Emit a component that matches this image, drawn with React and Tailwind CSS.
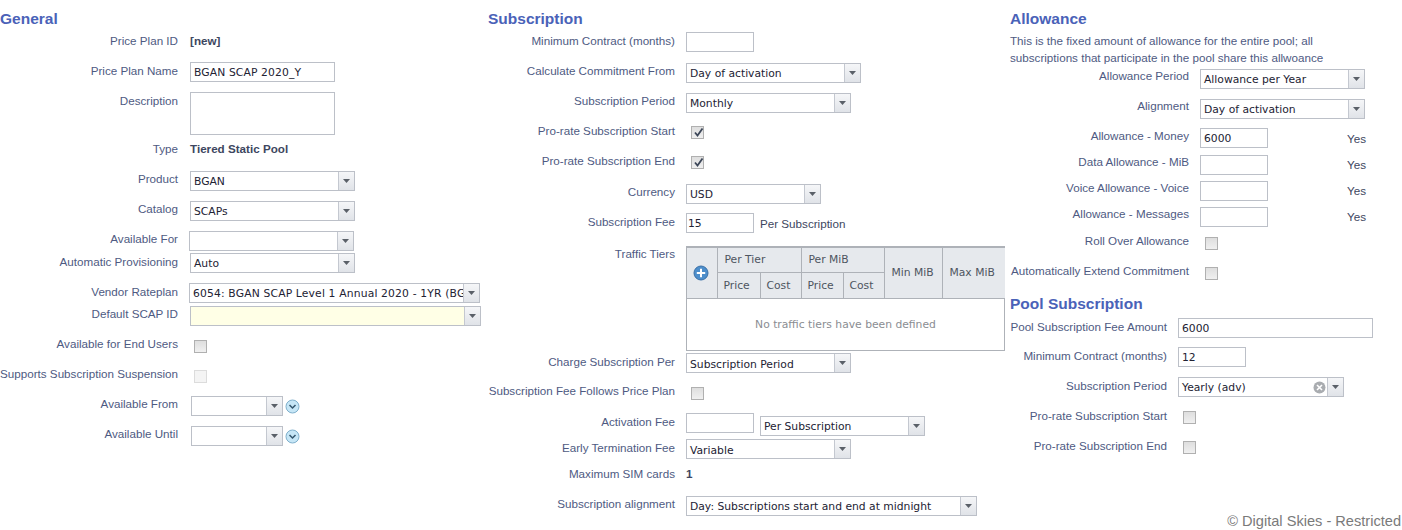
const sans = "font-['Liberation_Sans',Arial,sans-serif]";
const inputFont = "font-['DejaVu_Sans',Verdana,sans-serif] text-[10.75px] text-[#222233]";

function Row({ h, w, lo = "pt-px", children }) {
  return (
    <div className={`flex shrink-0 ${h}`}>
      <div className={`shrink-0 text-right text-[11.65px] leading-4 text-[#4e5a82] whitespace-nowrap ${w} ${lo}`}>{children[0]}</div>
      <div className="ml-[11px] min-w-0 flex-1">{children[1]}</div>
    </div>
  );
}

function Heading({ children }) {
  return <h2 className="text-[15.5px] leading-[18px] font-bold text-[#4a62b8]">{children}</h2>;
}

function TextBox({ w, value = "", tall = false, pad = "pl-[3px]", track = "" }) {
  return (
    <div className={`border border-[#bcc0c8] bg-white leading-[20px] overflow-hidden whitespace-nowrap ${pad} ${inputFont} ${tall ? "h-[43px]" : "h-[20px]"} ${w} ${track}`}>
      {value}
    </div>
  );
}

function Arrow() {
  return (
    <svg width="7" height="4" viewBox="0 0 7 4" aria-hidden="true">
      <path d="M0 0h7L3.5 4z" fill="#5a6068" />
    </svg>
  );
}

function Select({ w, value = "", bg = "bg-white", lead = "leading-[19px]", track = "", children }) {
  return (
    <div className={`flex h-[20px] border border-[#bcc0c8] ${bg} ${inputFont} ${w}`}>
      <div className={`relative min-w-0 flex-1 overflow-hidden whitespace-nowrap pl-[3px] ${lead} ${track}`}>
        {value}
        {children}
      </div>
      <div className="flex w-[16px] shrink-0 items-center justify-center border-l border-[#c4c8d0] bg-gradient-to-b from-[#f5f6f8] to-[#e0e3e8]">
        <Arrow />
      </div>
    </div>
  );
}

function Check({ checked, disabled }) {
  return (
    <div className={`relative ml-[5px] h-[13px] w-[13px] border ${disabled ? "border-[#dcdcdc] bg-[#f4f4f4]" : "border-[#b0b0b0] bg-gradient-to-b from-[#dedede] to-[#f0f0f0]"}`}>
      {checked && (
        <svg className="absolute left-px top-0" width="11" height="11" viewBox="0 0 11 11" aria-hidden="true">
          <path d="M2 5.5l2.5 3L9.5 1.5" fill="none" stroke="#3c4658" strokeWidth="1.8" />
        </svg>
      )}
    </div>
  );
}

function DateField() {
  return (
    <div className="ml-[2px] flex items-center">
      <Select w="w-[92px]" />
      <svg className="ml-[2px]" width="15" height="15" viewBox="0 0 15 15" aria-hidden="true">
        <circle cx="7.5" cy="7.5" r="6.5" fill="#c6e6f6" stroke="#7fb0cc" />
        <path d="M4.5 6l3 3 3-3" fill="none" stroke="#34566e" strokeWidth="1.5" />
      </svg>
    </div>
  );
}

function Static({ children, cls = "" }) {
  return <div className={`pt-px text-[11.65px] leading-4 font-bold text-[#3d4660] ${cls}`}>{children}</div>;
}

const th = "border border-[#aeb2b8] bg-[#e6e9ed] font-normal text-[#4e5560] text-[10.75px] text-left p-0 pl-[7px]";
const thSub = "border border-[#aeb2b8] bg-[#e6e9ed] font-normal text-[#4e5560] text-[10.75px] text-left p-0 pl-[6px] pt-[2px]";

function Tiers() {
  return (
    <div className={`w-[319px] border-t-2 border-x border-b border-[#aeb2b8] ${inputFont}`}>
      <table className="w-full table-fixed border-collapse">
        <colgroup>
          <col className="w-[30px]" />
          <col className="w-[43px]" />
          <col className="w-[41px]" />
          <col className="w-[42px]" />
          <col className="w-[41px]" />
          <col className="w-[58px]" />
          <col className="w-[63px]" />
        </colgroup>
        <thead>
          <tr className="h-[24px]">
            <th rowSpan={2} className={`${th} border-l-0 border-t-0 !pl-[6px]`}>
              <svg width="16" height="16" viewBox="0 0 16 16" aria-hidden="true" className="mt-px">
                <circle cx="8" cy="8" r="7" fill="#4d8ecb" stroke="#3a70a8" />
                <path d="M8 3.8v8.4M3.8 8h8.4" stroke="#ffffff" strokeWidth="2" />
              </svg>
            </th>
            <th colSpan={2} className={`${th} border-t-0`}>Per Tier</th>
            <th colSpan={2} className={`${th} border-t-0`}>Per MiB</th>
            <th rowSpan={2} className={`${th} border-t-0`}>Min MiB</th>
            <th rowSpan={2} className={`${th} border-t-0 border-r-0`}>Max MiB</th>
          </tr>
          <tr className="h-[26px]">
            <th className={thSub}>Price</th>
            <th className={thSub}>Cost</th>
            <th className={thSub}>Price</th>
            <th className={thSub}>Cost</th>
          </tr>
        </thead>
      </table>
      <div className="flex h-[51px] items-center justify-center pt-[3px] text-[#8a8d92]">No traffic tiers have been defined</div>
    </div>
  );
}

function General() {
  const L = "w-[178px]";
  return (
    <section className="w-[488px] shrink-0">
      <div className="h-[32px] pt-[10px]"><Heading>General</Heading></div>
      <Row h="h-[30px]" w={L}>{["Price Plan ID", <Static cls="ml-px">[new]</Static>]}</Row>
      <Row h="h-[30px]" w={L}>{["Price Plan Name", <div className="ml-px"><TextBox w="w-[145px]" value="BGAN SCAP 2020_Y" track="tracking-[0.12px]" /></div>]}</Row>
      <Row h="h-[48px]" w={L}>{["Description", <div className="ml-px"><TextBox w="w-[145px]" tall /></div>]}</Row>
      <Row h="h-[31px]" w={L}>{["Type", <Static cls="ml-px">Tiered Static Pool</Static>]}</Row>
      <Row h="h-[30px]" w={L} lo="pt-0">{["Product", <div className="ml-px"><Select w="w-[165px]" value="BGAN" /></div>]}</Row>
      <Row h="h-[30px]" w={L} lo="pt-0">{["Catalog", <div className="ml-px"><Select w="w-[165px]" value="SCAPs" /></div>]}</Row>
      <Row h="h-[22px]" w={L} lo="pt-0">{["Available For", <Select w="w-[165px]" />]}</Row>
      <Row h="h-[30px]" w={L}>{["Automatic Provisioning", <div className="ml-px"><Select w="w-[165px]" value="Auto" /></div>]}</Row>
      <Row h="h-[23px]" w={L}>{["Vendor Rateplan", <Select w="w-[291px]" value="6054: BGAN SCAP Level 1 Annual 2020 - 1YR (BGAN)" track="tracking-[0.16px]" />]}</Row>
      <Row h="h-[30px]" w={L} lo="pt-0">{["Default SCAP ID", <div className="ml-px"><Select w="w-[291px]" bg="bg-[#ffffe6]" /></div>]}</Row>
      <Row h="h-[30px]" w={L} lo="pt-0">{["Available for End Users", <div className="pt-[4px]"><Check /></div>]}</Row>
      <Row h="h-[30px]" w={L} lo="pt-0">{["Supports Subscription Suspension", <div className="pt-[4px]"><Check disabled /></div>]}</Row>
      <Row h="h-[30px]" w={L} lo="pt-0">{["Available From", <DateField />]}</Row>
      <Row h="h-[30px]" w={L} lo="pt-0">{["Available Until", <DateField />]}</Row>
    </section>
  );
}

function Subscription() {
  const L = "w-[187px]";
  return (
    <section className="w-[522px] shrink-0">
      <div className="h-[32px] pt-[10px]"><Heading>Subscription</Heading></div>
      <Row h="h-[31px]" w={L}>{["Minimum Contract (months)", <TextBox w="w-[68px]" />]}</Row>
      <Row h="h-[30px]" w={L} lo="pt-0">{["Calculate Commitment From", <Select w="w-[175px]" value="Day of activation" />]}</Row>
      <Row h="h-[30px]" w={L} lo="pt-0">{["Subscription Period", <Select w="w-[165px]" value="Monthly" />]}</Row>
      <Row h="h-[30px]" w={L} lo="pt-0">{["Pro-rate Subscription Start", <div className="pt-[3px]"><Check checked /></div>]}</Row>
      <Row h="h-[31px]" w={L} lo="pt-0">{["Pro-rate Subscription End", <div className="pt-[3px]"><Check checked /></div>]}</Row>
      <Row h="h-[29px]" w={L} lo="pt-0">{["Currency", <Select w="w-[135px]" value="USD" />]}</Row>
      <Row h="h-[33px]" w={L}>{["Subscription Fee", <div className="flex items-start"><TextBox w="w-[68px]" value="15" pad="pl-px" /><span className={`ml-[6px] pt-[3px] text-[11.65px] leading-4 text-[#3d4660] ${sans}`}>Per Subscription</span></div>]}</Row>
      <Row h="h-[107px]" w={L} lo="pt-0">{["Traffic Tiers", <Tiers />]}</Row>
      <Row h="h-[30px]" w={L}>{["Charge Subscription Per", <Select w="w-[165px]" value="Subscription Period" lead="leading-[21px]" />]}</Row>
      <Row h="h-[30px]" w={L} lo="pt-0">{["Subscription Fee Follows Price Plan", <div className="pt-[4px]"><Check /></div>]}</Row>
      <Row h="h-[26px]" w={L}>{["Activation Fee", <div className="flex items-start"><TextBox w="w-[68px]" /><div className="ml-[6px] mt-[3px]"><Select w="w-[165px]" value="Per Subscription" /></div></div>]}</Row>
      <Row h="h-[26px]" w={L}>{["Early Termination Fee", <Select w="w-[165px]" value="Variable" lead="leading-[21px]" />]}</Row>
      <Row h="h-[31px]" w={L}>{["Maximum SIM cards", <Static>1</Static>]}</Row>
      <Row h="h-[20px]" w={L} lo="pt-0">{["Subscription alignment", <Select w="w-[291px]" value="Day: Subscriptions start and end at midnight" />]}</Row>
    </section>
  );
}

function Yes({ pt = "pt-[2px]" }) {
  return <span className={`ml-[79px] text-[11.65px] leading-4 text-[#3d4660] ${pt}`}>Yes</span>;
}

function Allowance() {
  const L = "w-[179px]";
  const P = "w-[157px]";
  return (
    <section className="w-[392px] shrink-0">
      <div className="h-[32px] pt-[10px]"><Heading>Allowance</Heading></div>
      <p className="h-[37px] w-[330px] text-[11.65px] leading-[17px] text-[#4e5a82]">
        This is the fixed amount of allowance for the entire pool; all subscriptions that participate in the pool share this allwoance
      </p>
      <Row h="h-[30px]" w={L} lo="-mt-px">{["Allowance Period", <Select w="w-[165px]" value="Allowance per Year" />]}</Row>
      <Row h="h-[29px]" w={L} lo="-mt-px">{["Alignment", <Select w="w-[165px]" value="Day of activation" />]}</Row>
      <Row h="h-[27px]" w={L} lo="pt-0">{["Allowance - Money", <div className="flex"><TextBox w="w-[68px]" value="6000" /><Yes pt="pt-[3px]" /></div>]}</Row>
      <Row h="h-[26px]" w={L} lo="-mt-px">{["Data Allowance - MiB", <div className="flex"><TextBox w="w-[68px]" /><Yes /></div>]}</Row>
      <Row h="h-[26px]" w={L} lo="-mt-px">{["Voice Allowance - Voice", <div className="flex"><TextBox w="w-[68px]" /><Yes /></div>]}</Row>
      <Row h="h-[26px]" w={L} lo="-mt-px">{["Allowance - Messages", <div className="flex"><TextBox w="w-[68px]" /><Yes /></div>]}</Row>
      <Row h="h-[30px]" w={L} lo="pt-0">{["Roll Over Allowance", <div className="pt-[4px]"><Check /></div>]}</Row>
      <Row h="h-[25px]" w={L} lo="pt-0">{["Automatically Extend Commitment", <div className="pt-[4px]"><Check /></div>]}</Row>
      <div className="h-[30px] pt-[7px]"><Heading>Pool Subscription</Heading></div>
      <Row h="h-[29px]" w={P}>{["Pool Subscription Fee Amount", <TextBox w="w-[195px]" value="6000" />]}</Row>
      <Row h="h-[30px]" w={P}>{["Minimum Contract (months)", <TextBox w="w-[68px]" value="12" />]}</Row>
      <Row h="h-[30px]" w={P}>{["Subscription Period", (
        <Select w="w-[166px]" value="Yearly (adv)">
          <svg className="absolute right-[1px] top-[3px]" width="13" height="13" viewBox="0 0 13 13" aria-hidden="true">
            <circle cx="6.5" cy="6.5" r="6" fill="#a9acb0" />
            <path d="M4 4l5 5M9 4l-5 5" stroke="#ffffff" strokeWidth="1.6" />
          </svg>
        </Select>
      )]}</Row>
      <Row h="h-[30px]" w={P}>{["Pro-rate Subscription Start", <div className="pt-[4px]"><Check /></div>]}</Row>
      <Row h="h-[30px]" w={P}>{["Pro-rate Subscription End", <div className="pt-[4px]"><Check /></div>]}</Row>
    </section>
  );
}

export default function App() {
  return (
    <div className={`relative flex h-[530px] w-[1402px] overflow-hidden bg-white ${sans}`}>
      <General />
      <Subscription />
      <Allowance />
      <div className="absolute bottom-0 right-px text-[14.6px] leading-[18px] text-[#7a7a7a]">© Digital Skies - Restricted</div>
    </div>
  );
}
